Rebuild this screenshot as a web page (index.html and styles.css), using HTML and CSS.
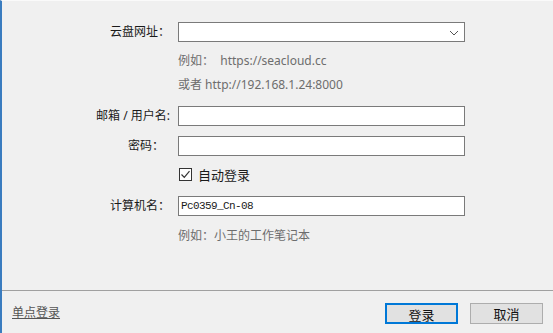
FILE: index.html
```html
<!DOCTYPE html>
<html lang="zh-CN">
<head>
    <meta charset="UTF-8">
    <meta name="viewport" content="width=device-width, initial-scale=1.0">
    <title>登录</title>
    <link rel="stylesheet" href="styles.css">
</head>
<body>
    <div id="dialog">
        <div id="form">
            <div class="row row-server">
                <span class="label">云盘网址：</span>
                <div class="combo">
                    <svg class="chevron" width="10" height="6" viewBox="0 0 10 6">
                        <path d="M1 1 L5 5 L9 1" fill="none" stroke="#555" stroke-width="1"/>
                    </svg>
                </div>
            </div>
            <div class="row hint hint-first">
                <span></span>
                <span>例如：&nbsp;&nbsp;https://seacloud.cc</span>
            </div>
            <div class="row hint">
                <span></span>
                <span>或者 http://192.168.1.24:8000</span>
            </div>
            <div class="row row-user">
                <span class="label">邮箱 / 用户名:</span>
                <div class="input"></div>
            </div>
            <div class="row row-pass">
                <span class="label label-pass">密码：</span>
                <div class="input"></div>
            </div>
            <div class="row row-check">
                <span></span>
                <label class="check">
                    <span class="box">
                        <svg width="11" height="11" viewBox="0 0 11 11">
                            <path d="M1.5 5.5 L4.3 8.3 L9.5 2.2" fill="none" stroke="#333" stroke-width="1.2"/>
                        </svg>
                    </span>
                    自动登录
                </label>
            </div>
            <div class="row row-computer">
                <span class="label">计算机名：</span>
                <div class="input mono">Pc0359_Cn-08</div>
            </div>
            <div class="row hint hint-last">
                <span></span>
                <span>例如：小王的工作笔记本</span>
            </div>
        </div>
        <div id="footer">
            <a class="link" href="#">单点登录</a>
            <div class="buttons">
                <button class="btn btn-default">登录</button>
                <button class="btn">取消</button>
            </div>
        </div>
    </div>
</body>
</html>
```

FILE: styles.css
```css
* {
    margin: 0;
    padding: 0;
    box-sizing: border-box;
}

body {
    width: 553px;
    height: 333px;
    background-color: #f0f0f0;
    font-family: "Noto Sans", "Noto Sans CJK SC", sans-serif;
    font-size: 12px;
    color: #1a1a1a;
    overflow: hidden;
}

#dialog {
    height: 333px;
    display: flex;
    flex-direction: column;
    border-left: 2px solid #3a7cbf;
    border-top: 1px solid #fafafa;
}

#form {
    flex: 1;
    padding-top: 21px;
}

.row {
    display: grid;
    grid-template-columns: 168px 287px;
    column-gap: 8px;
    align-items: center;
}

.label {
    text-align: right;
    line-height: 20px;
}
.label-pass {
    padding-right: 6px;
}

.combo,
.input {
    position: relative;
    height: 20px;
    background-color: white;
    border: 1px solid #7a7a7a;
}

.chevron {
    position: absolute;
    right: 5px;
    top: 7px;
}

.mono {
    font-family: "Liberation Mono", "DejaVu Sans Mono", monospace;
    font-size: 11px;
    line-height: 18px;
    padding-left: 2px;
    letter-spacing: -0.6px;
}

.hint {
    color: #6d6d6d;
    line-height: 24px;
}
.hint-first {
    margin-top: 7px;
}
.hint-last {
    margin-top: 8px;
}

.row-user {
    margin-top: 9px;
}
.row-pass {
    margin-top: 10px;
}
.row-check {
    margin-top: 8px;
    height: 20px;
}
.row-computer {
    margin-top: 12px;
}

.check {
    display: flex;
    align-items: center;
    gap: 6px;
    font-size: 13px;
}
.box {
    width: 13px;
    height: 13px;
    border: 1px solid #333;
    background-color: white;
    display: flex;
    align-items: center;
    justify-content: center;
    margin-left: 1px;
}

#footer {
    height: 43px;
    border-top: 1px solid #a0a0a0;
    display: flex;
    justify-content: space-between;
    align-items: flex-start;
    padding: 12px 10px 0 10px;
}

.link {
    color: #555;
    line-height: 20px;
    text-decoration: underline;
}

.buttons {
    display: flex;
    gap: 12px;
}

.btn {
    width: 73px;
    height: 21px;
    font-family: "Noto Sans CJK SC", sans-serif;
    font-size: 13px;
    background-color: #e1e1e1;
    border: 1px solid #adadad;
    color: #111;
}
.btn-default {
    border: 2px solid #0078d7;
}
```
